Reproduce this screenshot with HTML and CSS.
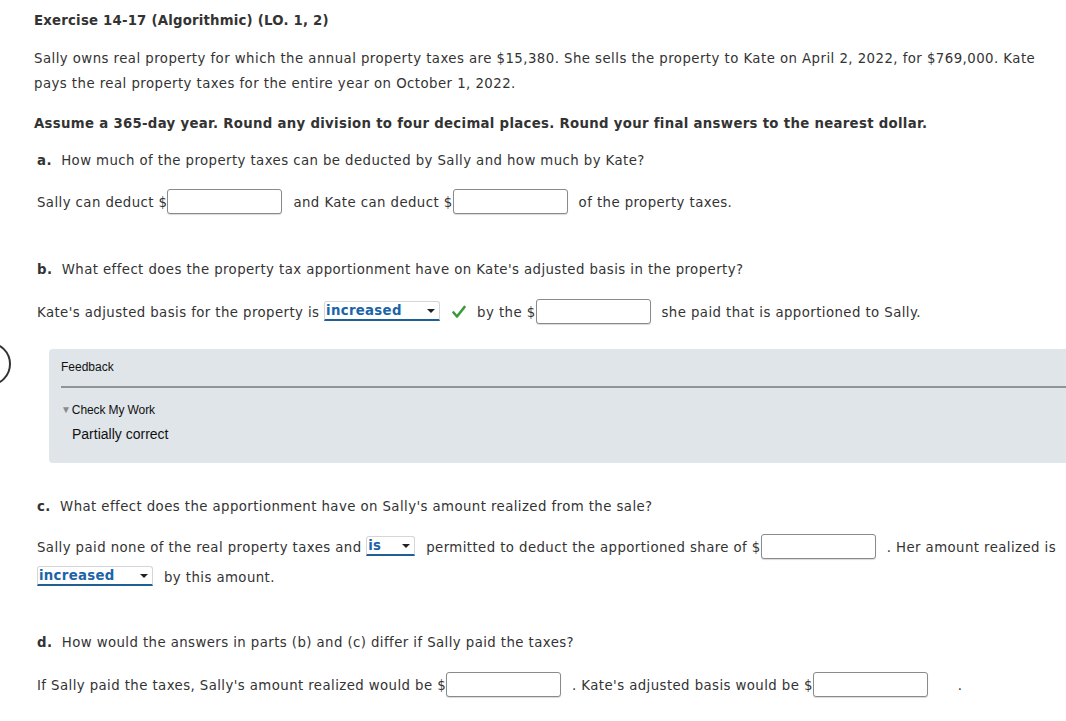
FILE: index.html
```html
<!DOCTYPE html>
<html>
<head>
<meta charset="utf-8">
<link rel="stylesheet" href="styles.css">
</head>
<body>
<div class="circle"></div>
<div class="page">
  <h1 class="title">Exercise 14-17 (Algorithmic) (LO. 1, 2)</h1>
  <p class="intro">Sally owns real property for which the annual property taxes are $15,380. She sells the property to Kate on April 2, 2022, for $769,000. Kate pays the real property taxes for the entire year on October 1, 2022.</p>
  <p class="instr">Assume a 365-day year. Round any division to four decimal places. Round your final answers to the nearest dollar.</p>

  <p class="q q-a"><b>a.</b>&nbsp; How much of the property taxes can be deducted by Sally and how much by Kate?</p>
  <p class="row row-a">Sally can deduct $<span class="inp"></span><span class="sp"></span>and Kate can deduct $<span class="inp"></span><span class="sp"></span>of the property taxes.</p>

  <p class="q q-b"><b>b.</b>&nbsp; What effect does the property tax apportionment have on Kate's adjusted basis in the property?</p>
  <p class="row row-b">Kate's adjusted basis for the property is <span class="sel sel-w">increased<i class="arr"></i></span><svg class="check" width="14" height="14" viewBox="0 0 14 14"><path d="M1.5 7.5 L5 11.5 L12.5 2" fill="none" stroke="#3c9a3c" stroke-width="2.6" stroke-linecap="round" stroke-linejoin="round"/></svg>by the $<span class="inp"></span><span class="sp"></span>she paid that is apportioned to Sally.</p>

  <div class="feedback">
    <div class="fb-head">Feedback</div>
    <div class="fb-body">
      <div class="fb-toggle"><span class="tri">&#9660;</span>Check My Work</div>
      <div class="fb-result">Partially correct</div>
    </div>
  </div>

  <p class="q q-c"><b>c.</b>&nbsp; What effect does the apportionment have on Sally's amount realized from the sale?</p>
  <p class="row row-c">Sally paid none of the real property taxes and <span class="sel sel-n">is<i class="arr"></i></span><span class="sp"></span>permitted to deduct the apportioned share of $<span class="inp"></span><span class="sp"></span>. Her amount realized is <span class="sel sel-w">increased<i class="arr"></i></span><span class="sp"></span>by this amount.</p>

  <p class="q q-d"><b>d.</b>&nbsp; How would the answers in parts (b) and (c) differ if Sally paid the taxes?</p>
  <p class="row row-d">If Sally paid the taxes, Sally's amount realized would be $<span class="inp"></span><span class="sp"></span>. Kate's adjusted basis would be $<span class="inp"></span><span class="sp2"></span>.</p>
</div>
</body>
</html>
```
FILE: styles.css
```css
html, body {
  margin: 0;
  padding: 0;
  background: #fff;
  overflow: hidden;
}
body {
  font-family: "DejaVu Sans", Verdana, sans-serif;
  font-size: 13px;
  color: #333;
  position: relative;
  width: 1066px;
  height: 721px;
}
.circle {
  position: absolute;
  left: -33px;
  top: 342px;
  width: 40px;
  height: 40px;
  border: 2px solid #333;
  border-radius: 50%;
}
.page {
  padding: 11px 4px 0 34px;
  font-size: 13.3px;
  letter-spacing: 0.42px;
}
.title {
  margin: 0;
  font-size: 13.3px;
  line-height: 20px;
  font-weight: bold;
  letter-spacing: 0.2px;
}
.intro {
  margin: 15px 0 0 0;
  line-height: 25px;
  letter-spacing: 0.45px;
}
.instr {
  margin: 15px 0 0 0;
  line-height: 25px;
  font-weight: bold;
  letter-spacing: 0.3px;
}
.q {
  margin: 0;
  padding-left: 3px;
  line-height: 25px;
}
.row {
  margin: 0;
  padding-left: 3px;
  line-height: 25px;
}
.q-a { margin-top: 12px; }
.row-a { margin-top: 17px; }
.q-b { margin-top: 42px; }
.row-b { margin-top: 18px; }
.q-c { margin-top: 31px; }
.row-c { margin-top: 14px; line-height: 30px; }
.q-d { margin-top: 37px; }
.row-d { margin-top: 18px; }

.inp {
  display: inline-block;
  width: 113px;
  height: 23px;
  border: 1px solid #8a8a8a;
  border-radius: 3px;
  box-shadow: 0 1px 1px rgba(0,0,0,0.15);
  vertical-align: middle;
  margin-top: -3px;
  background: #fff;
}
.sp { display: inline-block; width: 11px; }
.sp2 { display: inline-block; width: 30px; }

.sel {
  display: inline-block;
  position: relative;
  height: 17px;
  line-height: 17px;
  border: 1px solid #d6d6d6;
  border-bottom: 2px solid #1f5f93;
  border-radius: 3px 3px 0 0;
  font-weight: bold;
  color: #1b64a8;
  padding-left: 1px;
  vertical-align: middle;
  margin-top: -4px;
  box-sizing: content-box;
  background: #fff;
  letter-spacing: 0.3px;
}
.sel-w { width: 113px; }
.sel-n { width: 46px; }
.arr {
  position: absolute;
  right: 4px;
  top: 7px;
  width: 0;
  height: 0;
  border-left: 4px solid transparent;
  border-right: 4px solid transparent;
  border-top: 4px solid #222;
}
.check {
  vertical-align: middle;
  margin: -3px 11px 0 12px;
}

.feedback {
  margin: 24px 0 0 15px;
  width: 1040px;
  height: 114px;
  background: #dfe5e9;
  border-radius: 4px 0 0 4px;
  font-family: "Liberation Sans", Arial, sans-serif;
  color: #111;
  box-sizing: border-box;
  padding: 0 0 0 12px;
  letter-spacing: 0;
}
.fb-head {
  font-size: 12px;
  line-height: 16px;
  padding-top: 10px;
  height: 27px;
  border-bottom: 2px solid #8f9496;
  box-sizing: content-box;
}
.fb-body {
  padding-top: 14px;
}
.fb-toggle {
  font-size: 12px;
  line-height: 16px;
  letter-spacing: -0.1px;
}
.tri {
  color: #8a8a8a;
  font-size: 10px;
  margin-right: 1px;
  position: relative;
  top: -1px;
}
.fb-result {
  font-size: 14px;
  line-height: 18px;
  margin-top: 6px;
  padding-left: 11px;
}
```
